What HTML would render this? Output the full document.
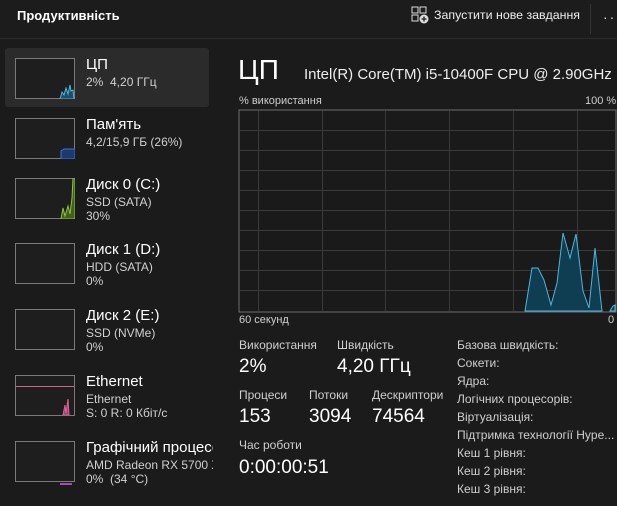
<!DOCTYPE html><html><head><meta charset="utf-8"><style>
*{margin:0;padding:0;box-sizing:border-box}
body{width:617px;height:506px;background:#1b1b1b;color:#fff;font-family:"Segoe UI","Liberation Sans","Noto Sans CJK SC",sans-serif;position:relative;overflow:hidden}
.a{position:absolute;white-space:nowrap}
.hdr{position:absolute;left:0;top:0;width:617px;height:39px;background:#1c1c1c;border-bottom:1px solid #2c2c2c}
.thumb{position:absolute;left:15px;width:60px;height:41px;border:1px solid #7a7a7a;background:#1e1e1e}
.t1{font-size:15px;color:#fff}
.t2{font-size:12px;color:#d0d0d0}
.lbl{font-size:12px;color:#cfcfcf}
.val{font-size:19px;color:#fff}
.r{font-size:12px;color:#cfcfcf}
</style></head><body>
<div class="hdr"></div>
<div class="a" style="left:17px;top:8px;font-size:13px;font-weight:bold">Продуктивність</div>
<svg class="a" style="left:411px;top:6px" width="18" height="18" viewBox="0 0 18 18"><rect x="1" y="1" width="6" height="6" fill="none" stroke="#ddd"/><rect x="9" y="1" width="6" height="6" fill="none" stroke="#ddd"/><rect x="1" y="9" width="6" height="6" fill="none" stroke="#ddd"/><circle cx="13" cy="13" r="4.5" fill="#ddd"/><path d="M13 10.5v5M10.5 13h5" stroke="#1c1c1c" stroke-width="1.3"/></svg>
<div class="a" style="left:434px;top:8px;font-size:12.4px;color:#eee">Запустити нове завдання</div>
<div class="a" style="left:590px;top:4px;width:1px;height:30px;background:#333"></div>
<div class="a" style="left:603px;top:9px;font-size:14px;color:#ddd;letter-spacing:2px">··</div>

<div class="a" style="left:5px;top:48px;width:204px;height:59px;background:#2b2b2b;border-radius:3px"></div>
<div class="thumb" style="top:58px"></div>
<svg class="a" style="left:58px;top:80px" width="17" height="19"><path d="M2 19L4 12 6 15 8 8 10 14 12 5 13 11 15 10 16 19Z" fill="#1f4d66" stroke="#4cb6e0" stroke-width="1"/></svg>
<div class="a t1" style="left:86px;top:56px">ЦП</div>
<div class="a t2" style="left:86px;top:75px">2%&nbsp; 4,20 ГГц</div>

<div class="thumb" style="top:118px"></div>
<svg class="a" style="left:60px;top:146px" width="15" height="13"><path d="M1 13V5L4 3 9 3 15 3V13Z" fill="#1c3a70" stroke="#3a73d0"/></svg>
<div class="a t1" style="left:86px;top:116px">Пам'ять</div>
<div class="a t2" style="left:86px;top:135px">4,2/15,9 ГБ (26%)</div>

<div class="thumb" style="top:178px"></div>
<svg class="a" style="left:60px;top:178px" width="15" height="41"><path d="M1 41L3 30 5 38 8 28 10 36 12 20 13 0 15 0V41Z" fill="#43601a" stroke="#8cc63c"/></svg>
<div class="a t1" style="left:86px;top:176px">Диск 0 (C:)</div>
<div class="a t2" style="left:86px;top:195px">SSD (SATA)</div>
<div class="a t2" style="left:86px;top:209px">30%</div>

<div class="thumb" style="top:243px"></div>
<div class="a t1" style="left:86px;top:241px">Диск 1 (D:)</div>
<div class="a t2" style="left:86px;top:260px">HDD (SATA)</div>
<div class="a t2" style="left:86px;top:274px">0%</div>

<div class="thumb" style="top:309px"></div>
<div class="a t1" style="left:86px;top:307px">Диск 2 (E:)</div>
<div class="a t2" style="left:86px;top:326px">SSD (NVMe)</div>
<div class="a t2" style="left:86px;top:340px">0%</div>

<div class="thumb" style="top:375px"></div>
<div class="a" style="left:16px;top:386px;width:58px;height:1px;background:#d45f8a"></div>
<svg class="a" style="left:62px;top:395px" width="12" height="20"><path d="M1 20L3 10 4 18 6 4 7 20Z" fill="#a0406a" stroke="#e0609a"/></svg>
<div class="a t1" style="left:86px;top:373px">Ethernet</div>
<div class="a t2" style="left:86px;top:392px">Ethernet</div>
<div class="a t2" style="left:86px;top:406px">S: 0 R: 0 Кбіт/с</div>

<div class="thumb" style="top:441px"></div>
<div class="a" style="left:60px;top:483px;width:12px;height:2px;background:#a050b0"></div>
<div class="a t1" style="left:86px;top:439px;width:127px;overflow:hidden">Графічний процесор</div>
<div class="a t2" style="left:86px;top:458px;width:127px;overflow:hidden">AMD Radeon RX 5700 XT</div>
<div class="a t2" style="left:86px;top:472px">0%&nbsp; (34 °C)</div>

<div class="a" style="left:238px;top:54px;font-size:28px;font-weight:300">ЦП</div>
<div class="a" style="left:304px;top:66px;font-size:15px;color:#eee">Intel(R) Core(TM) i5-10400F CPU @ 2.90GHz</div>
<div class="a lbl" style="left:239px;top:95px;font-size:11px">% використання</div>
<div class="a lbl" style="left:585px;top:95px;font-size:11px">100 %</div>
<svg class="a" style="left:238px;top:109px" width="379" height="204">
<rect x="1" y="1" width="377" height="202" fill="#1a1a1a" stroke="#6e6e6e"/>
<g stroke="#3a3a3a" stroke-width="1">
<path d="M2 21.5H377M2 41.5H377M2 61.5H377M2 81.5H377M2 101.5H377M2 121.5H377M2 141.5H377M2 161.5H377M2 181.5H377"/>
<path d="M20.5 2V202M84.5 2V202M147.5 2V202M211.5 2V202M275.5 2V202M339.5 2V202"/>
</g>
<path d="M287 202L294 159 300 159 306 171 313 196 319 174 325 124 332 149 338 125 345 182 351 199 357 139 364 202ZM372 202L375 197 377 196V202Z" fill="#0f3d52" stroke="#4cb6e0" stroke-width="1"/>
</svg>
<div class="a lbl" style="left:239px;top:314px;font-size:11px">60 секунд</div>
<div class="a lbl" style="left:608px;top:314px;font-size:11px">0</div>

<div class="a lbl" style="left:239px;top:338px">Використання</div>
<div class="a lbl" style="left:337px;top:338px">Швидкість</div>
<div class="a val" style="left:239px;top:356px">2%</div>
<div class="a val" style="left:337px;top:356px">4,20 ГГц</div>
<div class="a lbl" style="left:239px;top:388px">Процеси</div>
<div class="a lbl" style="left:309px;top:388px">Потоки</div>
<div class="a lbl" style="left:372px;top:388px">Дескриптори</div>
<div class="a val" style="left:239px;top:406px">153</div>
<div class="a val" style="left:309px;top:406px">3094</div>
<div class="a val" style="left:372px;top:406px">74564</div>
<div class="a lbl" style="left:239px;top:438px">Час роботи</div>
<div class="a val" style="left:239px;top:457px">0:00:00:51</div>

<div class="a r" style="left:457px;top:338px">Базова швидкість:</div>
<div class="a r" style="left:457px;top:356px">Сокети:</div>
<div class="a r" style="left:457px;top:374px">Ядра:</div>
<div class="a r" style="left:457px;top:392px">Логічних процесорів:</div>
<div class="a r" style="left:457px;top:410px">Віртуалізація:</div>
<div class="a r" style="left:457px;top:428px">Підтримка технології Hype...</div>
<div class="a r" style="left:457px;top:446px">Кеш 1 рівня:</div>
<div class="a r" style="left:457px;top:464px">Кеш 2 рівня:</div>
<div class="a r" style="left:457px;top:482px">Кеш 3 рівня:</div>
</body></html>
